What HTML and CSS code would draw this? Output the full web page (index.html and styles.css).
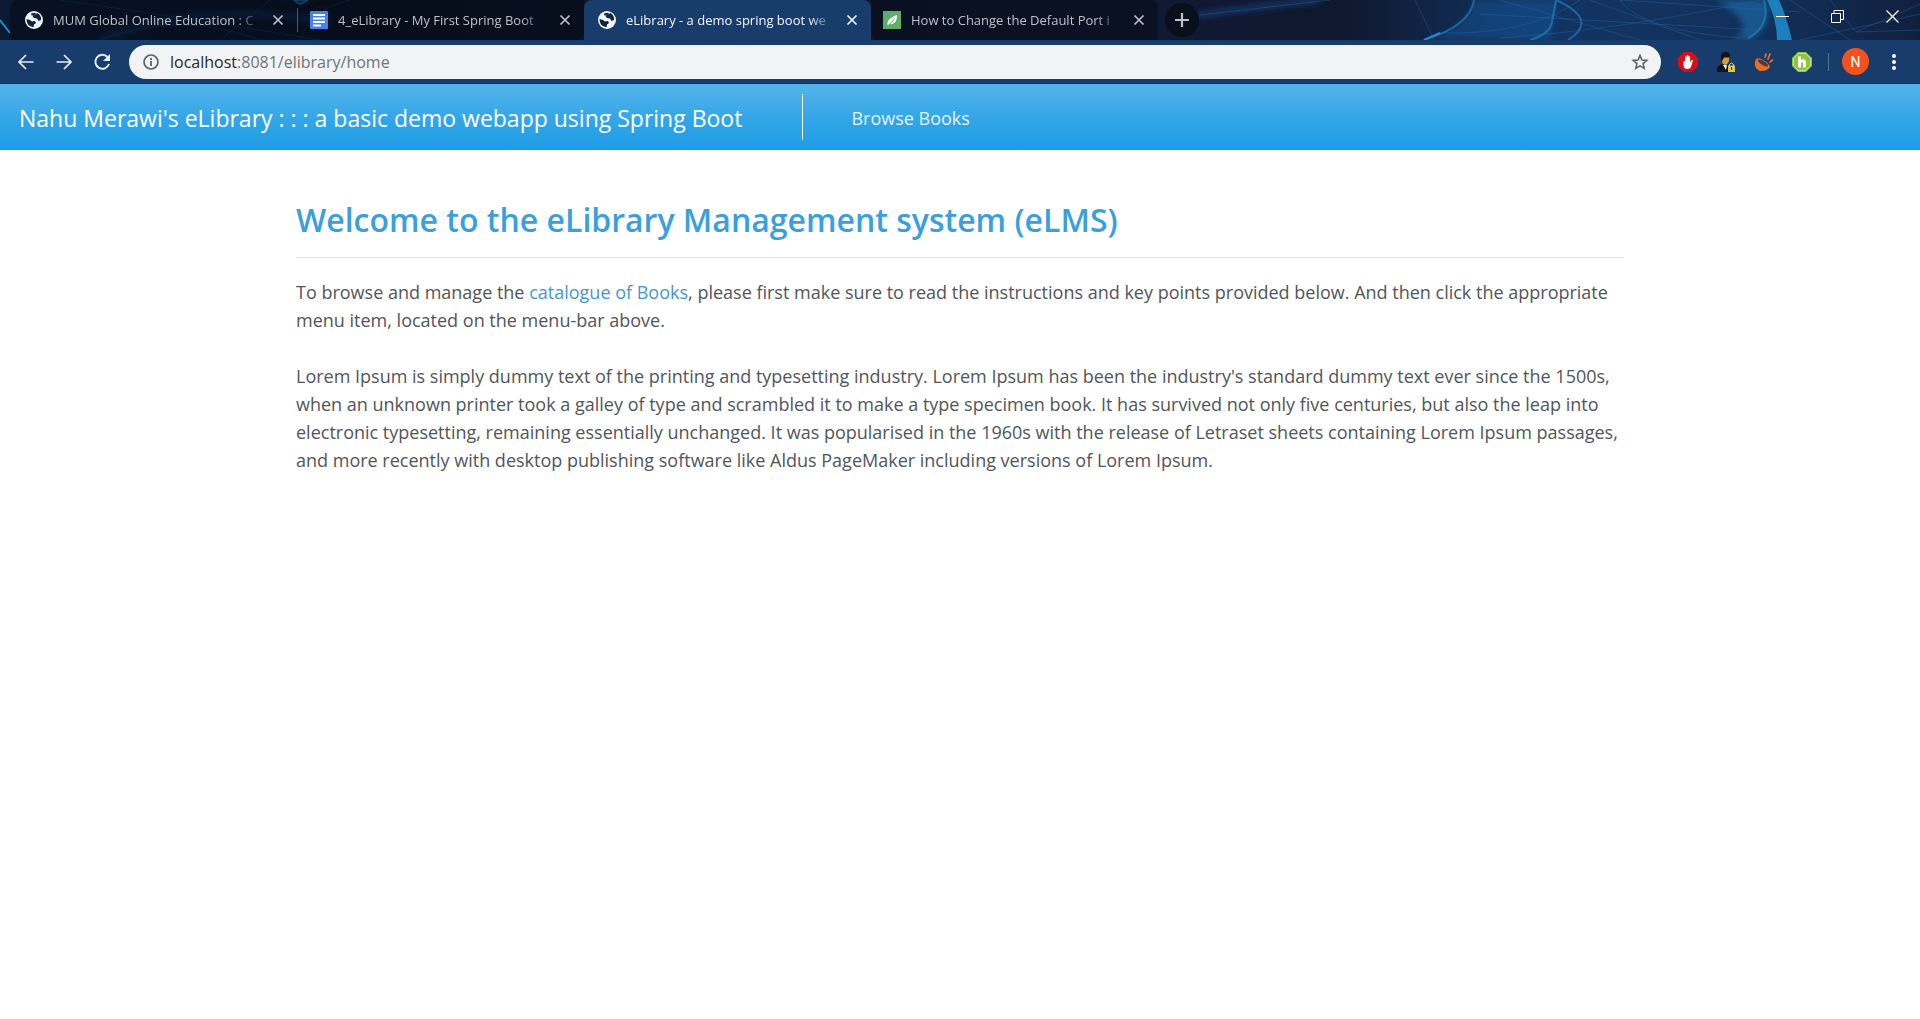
FILE: index.html
```html
<!DOCTYPE html>
<html lang="en">
<head>
<meta charset="utf-8">
<title>eLibrary - a demo spring boot webapp</title>
<link rel="stylesheet" href="styles.css">
</head>
<body>
<svg class="sprite" aria-hidden="true">
  <symbol id="globe" viewBox="0 0 18 18"><circle cx="9" cy="9" r="9" fill="#eef3f8"/><path d="M1.500 8 5 9l2 1.500 3-.5 1 2-2 1.500-.5 2.700L6 15.500C3 14.500 1.500 11.500 1.500 8ZM6 2.500l4-.8 1 1.300-3.500 2L9 7l3 .5 1.500 2.500 2.500-1C16.500 5.500 14.500 3 12 2L10 4 6.500 4.500Z" fill="#10213a"/></symbol>
  <symbol id="cross" viewBox="0 0 12 12"><path d="M1.500 1.500l9 9m0-9l-9 9" stroke="currentColor" stroke-width="1.700" fill="none"/></symbol>
</svg>
<header class="browser">
  <div class="tabstrip">
    <svg class="wallpaper" viewBox="0 0 1920 40" preserveAspectRatio="none" aria-hidden="true">
      <defs>
        <linearGradient id="sky"><stop offset="0" stop-color="#0a1a35"/><stop offset=".2" stop-color="#091222"/><stop offset=".55" stop-color="#101a35"/><stop offset=".7" stop-color="#10182f"/><stop offset=".8" stop-color="#123463"/><stop offset=".92" stop-color="#12305a"/><stop offset="1" stop-color="#111f3f"/></linearGradient>
        <filter id="glow" x="-5%" y="-50%" width="110%" height="200%"><feGaussianBlur stdDeviation="3"/></filter>
      </defs>
      <path d="M0 0h1920v40H0Z" fill="url(#sky)"/>
      <g filter="url(#glow)">
        <path d="M1424 40Q1470 28 1474 0H1560Q1552 20 1552 40Z" fill="#17508c" opacity=".6"/>
        <path d="M1715 0h52q6 26-16 40h-20Q1762 26 1715 0Z" fill="#1b6fae" opacity=".6"/>
        <path d="M100 40Q200 0 330 22M1195 16Q1260 6 1320 0" fill="none" stroke="#1c4f94" stroke-width="5" opacity=".6"/>
      </g>
      <g fill="none" stroke="#2468ab" stroke-width="1" opacity=".4">
        <path d="M100 40Q180 10 260 40M60 0Q200 20 320 40M90 20L125 40M270 0L220 40M350 0Q310 10 300 40M1200 15L1330 0M1415 0L1434 40M1480 14L1760 30M1440 33Q1530 35 1580 0M1500 38Q1620 30 1760 0M1500 0L1640 40M1590 0L1700 40M1620 0Q1640 30 1740 38M1620 0L1800 12M1790 0L1850 40M1856 32L1920 4M1856 32L1830 0M1856 32L1920 30M1800 40L1920 14"/>
      </g>
      <path d="M1424 40Q1470 26 1474 0M1530 40Q1550 34 1552 22L1556 0M1556 0Q1600 20 1568 40M1764 0Q1771 26 1748 38" fill="none" stroke="#2387c8" stroke-width="2" opacity=".6"/>
      <path d="M1767 0Q1777 20 1777 40H1792Q1786 15 1779 0Z" fill="#1b80bd"/>
      <path d="M0 20L10 33M294 0h14l-8 4ZM1424 40l16-7" fill="none" stroke="#2589cb" stroke-width="2"/>
    </svg>
    <nav class="tabs" aria-label="Open tabs">
      <div class="tab"><svg class="favicon"><use href="#globe"/></svg><span class="tab-title">MUM Global Online Education : C</span><button class="close" aria-label="Close tab"><svg><use href="#cross"/></svg></button></div>
      <div class="tab divided"><svg class="favicon" viewBox="0 0 18 18"><rect width="18" height="18" rx="1" fill="#4383f3"/><path d="M3 4h12M3 7.500h12M3 11h12M3 14.500h8" stroke="#fff" stroke-width="2"/></svg><span class="tab-title">4_eLibrary - My First Spring Boot</span><button class="close" aria-label="Close tab"><svg><use href="#cross"/></svg></button></div>
      <div class="tab active"><svg class="favicon"><use href="#globe"/></svg><span class="tab-title">eLibrary - a demo spring boot we</span><button class="close" aria-label="Close tab"><svg><use href="#cross"/></svg></button></div>
      <div class="tab last"><svg class="favicon" viewBox="0 0 18 18"><path d="M0 0h18v18H0Z" fill="#5eae69"/><path d="M4.500 14C4 9 7 7 13.800 4C14.500 10 11 14 6.500 13L5.500 14.500Z" fill="#fff"/><path d="M5 14.500Q9 11.500 11.500 7.500" fill="none" stroke="#5eae69"/></svg><span class="tab-title">How to Change the Default Port i</span><button class="close" aria-label="Close tab"><svg><use href="#cross"/></svg></button></div>
    </nav>
    <button class="new-tab" aria-label="New tab"><svg viewBox="0 0 14 14"><path d="M7 0v14M0 7h14" stroke="currentColor" stroke-width="2.200"/></svg></button>
    <div class="window-controls">
      <button aria-label="Minimize"><svg viewBox="0 0 13 13"><path d="M0 6.500h13" stroke="#fff"/></svg></button>
      <button aria-label="Restore"><svg viewBox="0 0 13 13"><path d="M.5 3.500h9v9h-9ZM3 3V.5h9.500v9H10" fill="none" stroke="#fff"/></svg></button>
      <button aria-label="Close"><svg viewBox="0 0 13 13"><path d="M.5 .5l12 12m0-12l-12 12" stroke="#fff" stroke-width="1.200"/></svg></button>
    </div>
  </div>
  <div class="toolbar">
    <div class="history">
      <button aria-label="Back"><svg viewBox="0 0 18 18"><path d="M16.500 9H2M9 2L2 9l7 7" fill="none" stroke="currentColor" stroke-width="1.700"/></svg></button>
      <button aria-label="Forward"><svg viewBox="0 0 18 18"><path d="M1.500 9H16M9 2l7 7-7 7" fill="none" stroke="currentColor" stroke-width="1.700"/></svg></button>
      <button aria-label="Reload"><svg viewBox="0 0 18 18"><path d="M14.500 4A7 7 0 1 0 16 11" fill="none" stroke="currentColor" stroke-width="1.900"/><path d="M17 1v7h-7Z" fill="currentColor"/></svg></button>
    </div>
    <div class="address">
      <svg class="info" viewBox="0 0 16 16"><circle cx="8" cy="8" r="7" fill="none" stroke="#5f6368" stroke-width="1.700"/><path d="M8 7v5M8 4v2" stroke="#5f6368" stroke-width="1.800"/></svg>
      <a class="url" href="#home"><span class="host">localhost</span>:8081/elibrary/home</a>
      <button class="star" aria-label="Bookmark this page"><svg viewBox="0 0 18 18"><path d="M9 2.500l1.900 4.500 4.900.4-3.700 3.200 1.100 4.800L9 12.900l-4.200 2.500 1.100-4.800L2.200 7.400l4.900-.4Z" fill="none" stroke="#5f6368" stroke-width="1.600"/></svg></button>
    </div>
    <div class="extensions">
      <button aria-label="Ad blocker"><svg viewBox="0 0 20 20"><path d="M6 0h8l6 6v8l-6 6H6l-6-6V6Z" fill="#d90f17"/><path d="M5.500 9.500q1-1 1.500 0V5q.9-1.200 1.700 0V3.500q.9-1.200 1.700 0V4.500q.9-1.200 1.700 0V10l1.600-2q1.300-.6 1.200.6L13 15q-1 2-3.500 2-3.500 0-4-3.500Z" fill="#fff"/></svg></button>
      <button aria-label="Privacy guard"><svg viewBox="0 0 20 20"><path d="M1 20q-1-7 6-8l3 2 4-2q4 1 4 8Z" fill="#101318"/><path d="M6 4h7q1 8-4 9-3-1-3-4Z" fill="#d99a3a"/><path d="M5 4Q5 0 9.500 0T14 4L13 5.500H8L6 9 5 8Z" fill="#141414"/><path d="M7 13l3 5 1-5Z" fill="#eee"/><path d="M13.500 14v-1.500q2-3 4 0V14" fill="none" stroke="#ddd"/><path d="M12 13.500h7V20h-7Z" fill="#e5c53b"/><path d="M15.500 15v3" stroke="#333"/></svg></button>
      <button aria-label="Cookie helper"><svg viewBox="0 0 20 20"><path d="M2 7Q5 5 9 8q6 3 7 7-3 4-8 4T1 14Q0 10 2 7Z" fill="#ef6c1c"/><ellipse cx="9" cy="11" rx="6" ry="2" transform="rotate(32 9 11)" fill="#4a3a4c"/><path d="M11 5l1-3M14 7l2-5M16 10l2.500-2" stroke="#e36b2a" stroke-width="1.800" stroke-linecap="round"/></svg></button>
      <button aria-label="Helper extension"><svg viewBox="0 0 20 20"><path d="M6 0h8l6 6v8l-6 6H6l-6-6V6Z" fill="#8cc63f"/><path d="M6.500 1.500h7l5 5v7l-5 5h-7l-5-5v-7Z" fill="none" stroke="#d8edbb" stroke-width=".7"/><path d="M7.500 4.500v11M7.500 10q5-3 5 1v4.500" fill="none" stroke="#fff" stroke-width="3"/></svg></button>
      <span class="separator"></span>
      <button class="avatar" aria-label="Profile">N</button>
      <button class="menu" aria-label="Browser menu"><svg viewBox="0 0 4 16"><path d="M2 2h0M2 8h0M2 14h0" stroke="#fff" stroke-width="4" stroke-linecap="round"/></svg></button>
    </div>
  </div>
</header>
<nav class="navbar">
  <a class="brand" href="#home">Nahu Merawi's eLibrary : : : a basic demo webapp using Spring Boot</a>
  <a class="nav-link" href="#books">Browse Books</a>
</nav>
<main class="content">
  <h1>Welcome to the eLibrary Management system (eLMS)</h1>
  <p>To browse and manage the <a href="#books">catalogue of Books</a>, please first make sure to read the instructions and key points provided below. And then click the appropriate menu item, located on the menu-bar above.</p>
  <p>Lorem Ipsum is simply dummy text of the printing and typesetting industry. Lorem Ipsum has been the industry's standard dummy text ever since the 1500s, when an unknown printer took a galley of type and scrambled it to make a type specimen book. It has survived not only five centuries, but also the leap into electronic typesetting, remaining essentially unchanged. It was popularised in the 1960s with the release of Letraset sheets containing Lorem Ipsum passages, and more recently with desktop publishing software like Aldus PageMaker including versions of Lorem Ipsum.</p>
</main>
</body>
</html>
```
FILE: styles.css
```css
* { box-sizing: border-box; }
body { margin: 0; background: #fff; color: #50565c; font-family: "Open Sans", "Noto Sans", sans-serif; }
a { text-decoration: none; }
button { display: flex; align-items: center; justify-content: center; margin: 0; padding: 0; border: 0; background: none; color: inherit; font: inherit; }
svg { display: block; flex: none; }
.sprite { position: absolute; width: 0; height: 0; }

.tabstrip { position: relative; display: flex; align-items: center; height: 40px; padding-left: 10px; overflow: hidden; color: #bcc1c8; }
.wallpaper { position: absolute; inset: 0; width: 100%; height: 100%; }
.tabs { position: relative; display: flex; height: 40px; }
.tab { display: flex; align-items: center; width: 287px; padding: 0 9px 0 15px; background: rgba(5, 12, 24, .6); font-size: 13px; }
.tab:first-child { border-radius: 8px 0 0 0; }
.tab.divided { padding-left: 13px; border-radius: 0 0 8px 0; background-image: linear-gradient(#4a5a70, #4a5a70); background-position: 0 8px; background-size: 1px 24px; background-repeat: no-repeat; }
.tab.active { padding-left: 14px; border-radius: 8px 8px 0 0; background: #183c6b; color: #f1f5fa; }
.tab.last { padding-left: 12px; border-radius: 0 8px 0 8px; }
.favicon { width: 18px; height: 18px; margin-right: 10px; }
.tab-title { flex: 1; overflow: hidden; white-space: nowrap; mask-image: linear-gradient(to right, #000 88%, transparent); }
.close { width: 20px; height: 20px; margin-left: 8px; }
.close svg { width: 12px; height: 12px; }
.new-tab { position: relative; width: 34px; height: 34px; margin-left: 7px; border-radius: 50%; background: #090f1b; }
.new-tab svg { width: 14px; height: 14px; }
.window-controls { position: relative; display: flex; align-self: flex-start; margin-left: auto; }
.window-controls button { width: 55px; height: 32px; }
.window-controls svg { width: 13px; height: 13px; }

.toolbar { display: flex; align-items: center; height: 44px; padding: 0 19px 0 17px; border-bottom: 1px solid #16335c; background: #183c6b; color: #e8eff8; }
.history { display: flex; gap: 20px; margin-right: 18px; }
.history svg { width: 18px; height: 18px; }
.address { display: flex; flex: 1; align-items: center; height: 34px; padding: 0 12px 0 14px; border-radius: 17px; background: #f1f3f4; }
.info { width: 16px; height: 16px; margin-right: 11px; }
.url { flex: 1; color: #70757a; font-size: 16px; }
.host { color: #26292c; }
.star svg { width: 18px; height: 18px; }
.extensions { display: flex; align-items: center; gap: 18px; margin-left: 17px; }
.extensions svg { width: 20px; height: 20px; }
.separator { width: 1px; height: 18px; margin: 0 -5px 0 -2px; background: #597191; }
.avatar { width: 27px; height: 27px; border-radius: 50%; background: #f4511e; color: #fff; font: 14px Roboto, sans-serif; }
.extensions .menu svg { width: 14px; height: 16px; }

.navbar { display: flex; align-items: center; padding: 10px 19px; background: linear-gradient(#54b4eb, #2fa4e7 60%, #1d9ce5); }
.brand { padding-top: 2px; color: #fff; font-size: 23px; line-height: 32px; }
.nav-link { display: flex; align-items: center; height: 46px; margin-left: 60px; padding: 2px 0 0 48px; border-left: 1px solid #fff; color: #e1f2fc; font-size: 18px; }

.content { width: 70%; min-width: 320px; margin: 0 auto; padding: 48px 8px; }
h1 { margin: 0 0 20px; padding-bottom: 16px; border-bottom: 1px solid #dfe1e3; color: #3a9fdd; font-size: 32px; font-weight: 600; line-height: 43px; }
p { margin: 0 0 28px; font-size: 18px; line-height: 28px; }
p a { color: #4596d4; }
```
